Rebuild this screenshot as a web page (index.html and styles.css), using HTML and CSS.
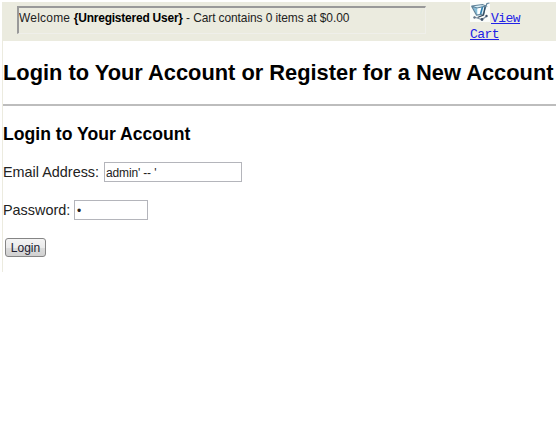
FILE: index.html
```html
<!DOCTYPE html>
<html lang="en">
<head>
<meta charset="utf-8">
<title>Login</title>
<link rel="stylesheet" href="styles.css">
</head>
<body>
<div class="page">
  <header class="topbar">
    <div class="welcome"><span class="welcome-text"><span class="greeting">Welcome </span><b>{Unregistered User}</b><span class="status"> - Cart contains 0 items at $0.00</span></span></div>
    <div class="cart">
      <svg class="cart-icon" width="20" height="20" viewBox="0 0 20 20">
        <rect width="20" height="20" fill="#fafcfa"/>
        <path d="M2 4l10-1 4 1-2 9-7 1z" fill="#d9f1fa"/>
        <path d="M2 4l5 9V6z" fill="#86bdd8"/>
        <path d="M8 6l4-1-1 6-3 2z" fill="#fff"/>
        <path d="M1.500 4L6.500 13l7-1L16 4l1-2.500 2.500-.5M1.500 4l11-1.500 3.500 1.500-9 2z" fill="none" stroke="#5f8299" stroke-width="1.200"/>
        <path d="M12.500 5l-2 7" fill="none" stroke="#2f7fae" stroke-width="1.600"/>
        <path d="M15 5l-1.500 8-6 2.500" fill="none" stroke="#34495c" stroke-width="1.300"/>
        <path d="M4 15l8 2.500 5-3.500" fill="none" stroke="#8295a5" stroke-width="1.300"/>
        <circle cx="4.500" cy="15.500" r="1.200" fill="#637386"/>
        <circle cx="12" cy="17.500" r="1.400" fill="#40536a"/>
        <circle cx="16.500" cy="14" r="1.200" fill="#40536a"/>
      </svg><a href="#" class="link">View</a><br><a href="#" class="link">Cart</a>
    </div>
  </header>
  <main class="content">
    <h1><span>Login to Your Account or Register for a New Account</span></h1>
    <hr>
    <h2><span>Login to Your Account</span></h2>
    <form>
      <div class="row"><label for="email"><span>Email Address:</span></label><input id="email" class="email" type="text" value="admin' -- '"></div>
      <div class="row"><label for="pw" class="pw-label"><span>Password:</span></label><input id="pw" class="pw" type="password" value="1"></div>
      <button type="button">Login</button>
    </form>
  </main>
</div>
</body>
</html>
```
FILE: styles.css
```css
* { box-sizing: border-box; }
body {
  margin: 0;
  background: #fff;
  color: #222;
  font-family: "Liberation Sans", Arial, sans-serif;
  overflow: hidden;
}
.page {
  width: 554px;
  height: 270px;
  margin: 2px 0 0 2px;
  border-left: 1px solid #ecebdf;
}
.topbar {
  display: flex;
  height: 39px;
  margin-left: -1px;
  background: #ebebdf;
}
.welcome {
  width: 409px;
  height: 28px;
  margin: 4px 0 0 15px;
  border: 2px solid #999;
  border-right: 1px solid #efefea;
  border-bottom: 1px solid #efefea;
  font-size: 13px;
  line-height: 20px;
  white-space: nowrap;
}
.welcome-text {
  display: inline-block;
  transform-origin: 0 0;
  transform: scaleX(.92);
}
.greeting { letter-spacing: .25px; }
.status { letter-spacing: -.1px; }
.welcome b { color: #000; letter-spacing: -.23px; }
.cart {
  width: 60px;
  margin-left: 44px;
  font: 13px/16px "Liberation Mono", monospace;
  letter-spacing: -.55px;
}
.cart-icon { display: inline-block; vertical-align: 0; margin-right: 1px; }
.link { color: #2222e6; }
.content { color: #222; }
h1, h2 { margin: 0; color: #000; white-space: nowrap; }
h1 span, h2 span, label span { display: inline-block; transform-origin: 0 0; }
h1 span { transform: scaleX(.992); }
h2 span { transform: scaleX(.978); }
h1 { height: 63px; padding-top: 20px; font-size: 22px; line-height: 24px; }
hr { height: 2px; margin: 0; border: 0; background: #bdbdbd; }
h2 { height: 56px; padding-top: 18px; font-size: 18px; line-height: 20px; }
form { display: flex; flex-direction: column; align-items: flex-start; }
.row { display: flex; align-items: center; height: 20px; margin-bottom: 18px; }
label { width: 101px; font-size: 15px; line-height: 20px; white-space: nowrap; }
label span { transform: scaleX(.96); }
.pw-label { width: 71px; }
input {
  height: 20px;
  margin: 0;
  padding: 2px 1px 0;
  border: 1px solid #b4b5bb;
  background: #fff;
  color: #222;
  font: 12px "Liberation Sans", Arial, sans-serif;
  letter-spacing: -.15px;
}
.email { width: 138px; }
.pw { width: 74px; padding-left: 2px; }
button {
  width: 41px;
  height: 19px;
  margin: 0 0 0 2px;
  padding: 0;
  border: 1px solid #858585;
  border-radius: 3px;
  background: linear-gradient(#f4f4f4, #ebebeb 50%, #dcdcdc 51%, #d0d0d0);
  color: #202030;
  font: 12px "Liberation Sans", Arial, sans-serif;
}
```
